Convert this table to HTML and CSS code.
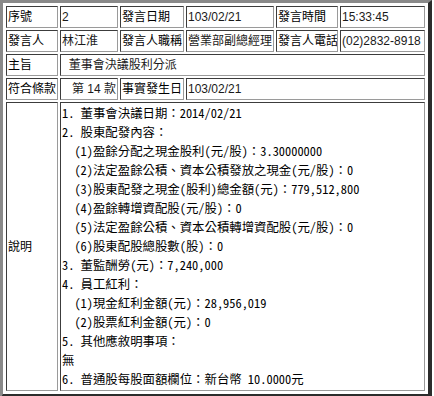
FILE: index.html
```html
<!DOCTYPE html>
<html lang="zh-Hant">
<head>
<meta charset="utf-8">
<title>重大訊息</title>
<link rel="stylesheet" href="styles.css">
</head>
<body>
<table class="info">
  <tr>
    <td class="c1 lbl">序號</td>
    <td class="c2 val">2</td>
    <td class="c3 lbl">發言日期</td>
    <td class="c4 val">103/02/21</td>
    <td class="c5 lbl">發言時間</td>
    <td class="c6 val">15:33:45</td>
  </tr>
  <tr>
    <td class="lbl">發言人</td>
    <td class="val">林江淮</td>
    <td class="lbl">發言人職稱</td>
    <td class="val">營業部副總經理</td>
    <td class="lbl">發言人電話</td>
    <td class="val">(02)2832-8918</td>
  </tr>
  <tr>
    <td class="lbl">主旨</td>
    <td class="val" colspan="5">&nbsp;&nbsp;董事會決議股利分派</td>
  </tr>
  <tr>
    <td class="lbl">符合條款</td>
    <td class="val">&nbsp;&nbsp;&nbsp;第 14 款</td>
    <td class="lbl">事實發生日</td>
    <td class="val" colspan="3">103/02/21</td>
  </tr>
  <tr>
    <td class="lbl mid">說明</td>
    <td class="val" colspan="5"><pre class="desc">1. 董事會決議日期：2014/02/21
2. 股東配發內容：
  (1)盈餘分配之現金股利(元/股)：3.30000000
  (2)法定盈餘公積、資本公積發放之現金(元/股)：0
  (3)股東配發之現金(股利)總金額(元)：779,512,800
  (4)盈餘轉增資配股(元/股)：0
  (5)法定盈餘公積、資本公積轉增資配股(元/股)：0
  (6)股東配股總股數(股)：0
3. 董監酬勞(元)：7,240,000
4. 員工紅利：
  (1)現金紅利金額(元)：28,956,019
  (2)股票紅利金額(元)：0
5. 其他應敘明事項：
無
6. 普通股每股面額欄位：新台幣 10.0000元</pre></td>
  </tr>
</table>
</body>
</html>
```

FILE: styles.css
```css
html, body {
  margin: 0;
  padding: 0;
  background: #ffffff;
}

.info {
  width: 431px;
  table-layout: fixed;
  border-collapse: separate;
  border-spacing: 2px;
  padding: 1px;
  border-style: solid;
  border-width: 3px 4px 5px 3px;
  border-color: #8a8a8a #2c2c2c #2c2c2c #8a8a8a;
  font-family: "Liberation Sans", "Noto Sans CJK TC", sans-serif;
  font-size: 12px;
  color: #000;
}

.info td {
  box-sizing: border-box;
  border: 1px solid;
  border-color: #3c3c3c #9a9a9a #9a9a9a #3c3c3c;
  padding: 1px;
  height: 22px;
  line-height: 18px;
  white-space: nowrap;
  overflow: hidden;
  vertical-align: middle;
}

.c1 { width: 52px; }
.c2 { width: 58px; }
.c3 { width: 64px; }
.c4 { width: 88px; }
.c5 { width: 62px; }
.c6 { width: 85px; }

.val {
  color: #1a1a1a;
}

.info td.mid {
  vertical-align: middle;
}

.desc {
  margin: 0;
  font-family: "Noto Sans Mono CJK TC", "Noto Sans CJK TC", monospace;
  font-size: 12.4px;
  line-height: 19px;
  color: #000;
}
```
